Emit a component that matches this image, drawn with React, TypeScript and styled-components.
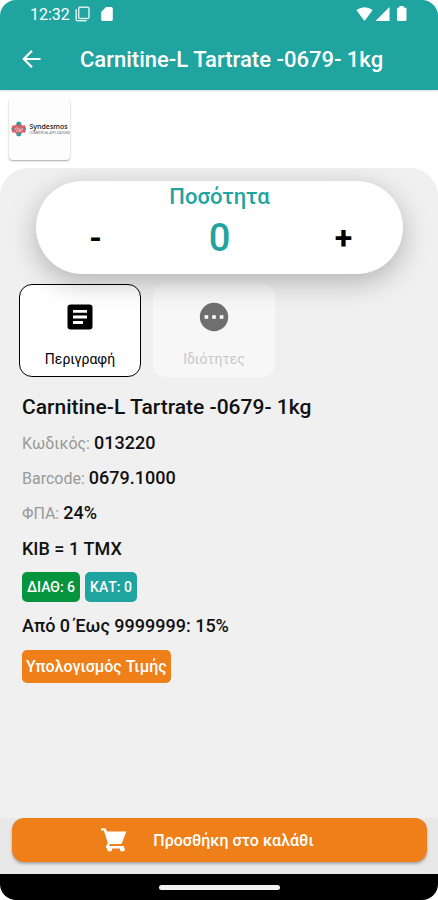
import React, { useState } from "react";
import styled, { createGlobalStyle } from "styled-components";

const teal = "#1fa49f";
const orange = "#ee7f19";

const GlobalStyle = createGlobalStyle`
  *, *::before, *::after { box-sizing: border-box; }
  body { margin: 0; background: #fff; font-family: Roboto, "Noto Sans", sans-serif; color: #111; }
  button { font: inherit; color: inherit; border: 0; padding: 0; background: none; cursor: pointer; }
  h1, h2, p, dl, dd { margin: 0; }
`;

const Screen = styled.div`
  display: flex;
  flex-direction: column;
  min-height: 100vh;
  border-radius: 16px;
  overflow: hidden;
  background: #fff;
`;

const TopArea = styled.header`
  background: ${teal};
  color: #fff;
  box-shadow: 0 1px 2px rgba(0, 0, 0, 0.15);
`;

const StatusBar = styled.div`
  display: flex;
  align-items: center;
  justify-content: space-between;
  height: 28px;
  padding: 0 30px;
  font-size: 16px;
`;

const StatusGroup = styled.div<{ $gap: number }>`
  display: flex;
  align-items: center;
  gap: ${(p) => p.$gap}px;
`;

const AppBar = styled.div`
  display: flex;
  align-items: center;
  gap: 37px;
  height: 62px;
  padding: 2px 20px 0;
`;

const BackButton = styled.button`
  display: flex;
  width: 23px;
`;

const Title = styled.h1`
  font-size: 22px;
  line-height: 28px;
  font-weight: 500;
  white-space: nowrap;
`;

const BrandStrip = styled.div`
  padding: 8px 9px;
`;

const BrandCard = styled.div`
  display: flex;
  align-items: center;
  gap: 3px;
  width: 61px;
  height: 62px;
  padding-left: 2px;
  border-radius: 4px;
  background: #fdfdfd;
  box-shadow: 0 1px 2px rgba(0, 0, 0, 0.35);
`;

const BrandText = styled.div`
  display: flex;
  flex-direction: column;
  font-family: "Open Sans", sans-serif;
  color: #222;
`;

const BrandName = styled.span`
  font-size: 7px;
  line-height: 8px;
  font-weight: 600;
`;

const BrandTag = styled.span`
  font-size: 3px;
  line-height: 4px;
  white-space: nowrap;
  color: #555;
`;

const Panel = styled.main`
  flex: 1;
  padding: 13px 19px 24px;
  border-radius: 28px 28px 0 0;
  background: #f0f0f0;
  overflow: hidden;
`;

const QuantityCard = styled.section`
  position: relative;
  display: grid;
  grid-template-columns: 1fr 1fr 1fr;
  grid-template-rows: 32px 1fr;
  column-gap: 5px;
  justify-items: center;
  align-items: center;
  height: 93px;
  margin: 0 16px 0 17px;
  padding-bottom: 12px;
  border-radius: 47px;
  background: #fff;
  box-shadow: 0 8px 28px rgba(0, 0, 0, 0.26);
`;

const QuantityLabel = styled.h2`
  grid-column: 1 / -1;
  font-size: 22px;
  line-height: 32px;
  font-weight: 500;
  color: ${teal};
`;

const StepButton = styled.button`
  width: 48px;
  height: 40px;
  font-size: 32px;
  line-height: 40px;
  font-weight: 700;
  color: #000;
`;

const QuantityValue = styled.output`
  font-size: 38px;
  line-height: 44px;
  font-weight: 500;
  color: ${teal};
`;

const Tabs = styled.div`
  display: flex;
  gap: 12px;
  margin-top: 10px;
`;

const Tab = styled.button<{ $active: boolean }>`
  display: flex;
  flex-direction: column;
  align-items: center;
  justify-content: space-between;
  width: 122px;
  height: 93px;
  padding: 16px 0 8px;
  border: 1px solid ${(p) => (p.$active ? "#000" : "transparent")};
  border-radius: 13px;
  background: ${(p) => (p.$active ? "#fff" : "#f7f7f7")};
  color: ${(p) => (p.$active ? "#000" : "#c8c8c8")};
  font-size: 14px;
  line-height: 18px;
`;

const Details = styled.div`
  display: flex;
  flex-direction: column;
  align-items: flex-start;
  padding: 16px 3px 0;
`;

const ProductName = styled.h2`
  font-size: 21px;
  line-height: 28px;
  font-weight: 500;
`;

const Facts = styled.dl`
  display: flex;
  flex-direction: column;
  gap: 11px;
  margin-top: 10px;
  line-height: 24px;
`;

const Fact = styled.div`
  display: flex;
  align-items: baseline;
  gap: 4px;
  height: 24px;

  dt { font-size: 16px; color: #999; }
  dd { font-size: 18px; font-weight: 500; }
`;

const Line = styled.p`
  margin-top: 12px;
  font-size: 18px;
  line-height: 24px;
  font-weight: 500;
`;

const Badges = styled.div`
  display: flex;
  gap: 5px;
  margin-top: 11px;
`;

const Badge = styled.span<{ $color: string }>`
  padding: 0 5px;
  border-radius: 5px;
  background: ${(p) => p.$color};
  color: #fff;
  font-size: 14px;
  line-height: 30px;
  font-weight: 500;
`;

const PriceButton = styled.button`
  height: 33px;
  margin-top: 12px;
  padding: 0 4px;
  border-radius: 5px;
  background: ${orange};
  color: #fff;
  font-size: 16px;
  font-weight: 500;
`;

const Footer = styled.footer`
  padding: 0 11px 12px 12px;
  background: #e8e8e8;
`;

const CartButton = styled.button`
  display: flex;
  align-items: center;
  justify-content: center;
  gap: 26px;
  width: 100%;
  height: 44px;
  padding-right: 24px;
  border-radius: 12px;
  background: ${orange};
  box-shadow: 0 2px 3px rgba(0, 0, 0, 0.28);
  color: #fff;
  font-size: 16px;
  font-weight: 500;
`;

const NavBar = styled.div`
  display: flex;
  align-items: center;
  justify-content: center;
  height: 26px;
  background: #000;
`;

const NavHandle = styled.div`
  width: 121px;
  height: 5px;
  border-radius: 3px;
  background: #f2f2f2;
`;

const BrandMark = () => (
  <svg width="16" height="16" viewBox="0 0 16 16" aria-hidden="true">
    <circle cx="8" cy="8" r="5.6" fill="#d9646b" />
    <g fill="none" stroke="#df5961" strokeWidth="2.4">
      <path d="M3 4.500A6.200 6.200 0 0 0 3 11.500M13 4.500A6.200 6.200 0 0 1 13 11.500" />
    </g>
    <path d="M5.500 1.300 8 .2l2.500 1.100L9.800 4H6.200zM5.500 14.700 8 15.800l2.500-1.100L9.800 12H6.200z" fill="#2b9a9c" />
    <path d="M.2 8 2.200 6.500v3zM15.800 8l-2-1.500v3z" fill="#2b9a9c" />
    <path d="M4 8.500c1-2 2-2 4-.5s3 1 4-.8M5 10.200c2-1 4 .8 6-.4" fill="none" stroke="#f7d9d9" strokeWidth=".9" />
  </svg>
);

export default function App() {
  const [quantity, setQuantity] = useState(0);
  const [tab, setTab] = useState("description");

  return (
    <>
      <GlobalStyle />
      <Screen>
        <TopArea>
          <StatusBar>
            <StatusGroup $gap={5}>
              <span>12:32</span>
              <StatusGroup $gap={11}>
                <svg width="15" height="16" viewBox="0 0 15 16" fill="none" stroke="#d5eeec" strokeWidth="1.5" aria-hidden="true">
                  <rect x="3.700" y="1.200" width="10.300" height="11.300" rx="1.200" />
                  <path d="M1.200 3.200v10.300q0 1.300 1.300 1.300h9.200" />
                </svg>
                <svg width="12" height="16" viewBox="0 0 12 16" fill="#fff" aria-hidden="true">
                  <path d="M5 1h5.200q1.600 0 1.600 1.600v10.800q0 1.600-1.600 1.600H1.800Q.2 15 .2 13.400V6z" />
                </svg>
              </StatusGroup>
            </StatusGroup>
            <StatusGroup $gap={2}>
              <svg width="17" height="16" viewBox="0 0 17 16" fill="#fff" aria-hidden="true">
                <path d="M.3 4Q8.500-1.500 16.700 4L8.500 15z" />
              </svg>
              <svg width="15" height="16" viewBox="0 0 15 16" fill="#fff" aria-hidden="true">
                <path d="M14.500 1v14H.5z" />
              </svg>
              <svg width="16" height="16" viewBox="0 0 16 16" fill="#fff" aria-hidden="true">
                <path d="M7.500 0h4v1.600h1.500q1.500 0 1.500 1.500v10.400q0 1.500-1.500 1.500h-7Q5 15 5 13.500V3.100q0-1.500 1.500-1.500h1z" />
              </svg>
            </StatusGroup>
          </StatusBar>
          <AppBar>
            <BackButton type="button" aria-label="Πίσω">
              <svg width="23" height="20" viewBox="0 0 23 20" fill="none" stroke="#fff" strokeWidth="2.200" aria-hidden="true">
                <path d="M20.500 9H4.500M12 .8 3.800 9l8.200 8.200" />
              </svg>
            </BackButton>
            <Title>Carnitine-L Tartrate -0679- 1kg</Title>
          </AppBar>
        </TopArea>

        <BrandStrip>
          <BrandCard>
            <BrandMark />
            <BrandText>
              <BrandName>Syndesmos</BrandName>
              <BrandTag>COMMERCIAL APPLICATIONS</BrandTag>
            </BrandText>
          </BrandCard>
        </BrandStrip>

        <Panel>
          <QuantityCard>
            <QuantityLabel>Ποσότητα</QuantityLabel>
            <StepButton type="button" onClick={() => setQuantity(Math.max(0, quantity - 1))}>-</StepButton>
            <QuantityValue>{quantity}</QuantityValue>
            <StepButton type="button" onClick={() => setQuantity(quantity + 1)}>+</StepButton>
          </QuantityCard>

          <Tabs role="tablist">
            <Tab type="button" role="tab" aria-selected={tab === "description"} $active={tab === "description"} onClick={() => setTab("description")}>
              <svg width="32" height="32" viewBox="0 0 32 32" aria-hidden="true">
                <rect x="3.500" y="3.500" width="25" height="25" rx="3" fill="#000" />
                <path d="M9 10.300h14M9 16h14M9 21.500h10" stroke="#fff" strokeWidth="2.800" />
              </svg>
              Περιγραφή
            </Tab>
            <Tab type="button" role="tab" aria-selected={tab === "properties"} $active={tab === "properties"} onClick={() => setTab("properties")}>
              <svg width="32" height="32" viewBox="0 0 32 32" aria-hidden="true">
                <circle cx="16" cy="16" r="14.200" fill="#6f6f6f" />
                <path d="M6.600 14.200h3.600v3.600H6.600zM14.200 14.200h3.600v3.600h-3.600zM21.800 14.200h3.600v3.600h-3.600z" fill="#fff" />
              </svg>
              Ιδιότητες
            </Tab>
          </Tabs>

          <Details>
            <ProductName>Carnitine-L Tartrate -0679- 1kg</ProductName>
            <Facts>
              <Fact><dt>Κωδικός:</dt><dd>013220</dd></Fact>
              <Fact><dt>Barcode:</dt><dd>0679.1000</dd></Fact>
              <Fact><dt>ΦΠΑ:</dt><dd>24%</dd></Fact>
            </Facts>
            <Line>ΚΙΒ = 1 ΤΜΧ</Line>
            <Badges>
              <Badge $color="#07943f">ΔΙΑΘ: 6</Badge>
              <Badge $color={teal}>ΚΑΤ: 0</Badge>
            </Badges>
            <Line>Από 0 Έως 9999999: 15%</Line>
            <PriceButton type="button">Υπολογισμός Τιμής</PriceButton>
          </Details>
        </Panel>

        <Footer>
          <CartButton type="button">
            <svg width="26" height="24" viewBox="0 0 26 24" fill="#fff" aria-hidden="true">
              <path d="M0 .3h4.500l1.600 3.300h19.200l-4.100 10.800q-.6 1.500-2.200 1.500H9.100l-1.200 2.200h14.900v2.300H6.700q-2.200 0-1.600-2.200l1.700-3.200L2.900 2.600H0z" />
              <circle cx="8.600" cy="20.900" r="2.500" />
              <circle cx="21.300" cy="20.900" r="2.500" />
            </svg>
            Προσθήκη στο καλάθι
          </CartButton>
        </Footer>
        <NavBar><NavHandle /></NavBar>
      </Screen>
    </>
  );
}
